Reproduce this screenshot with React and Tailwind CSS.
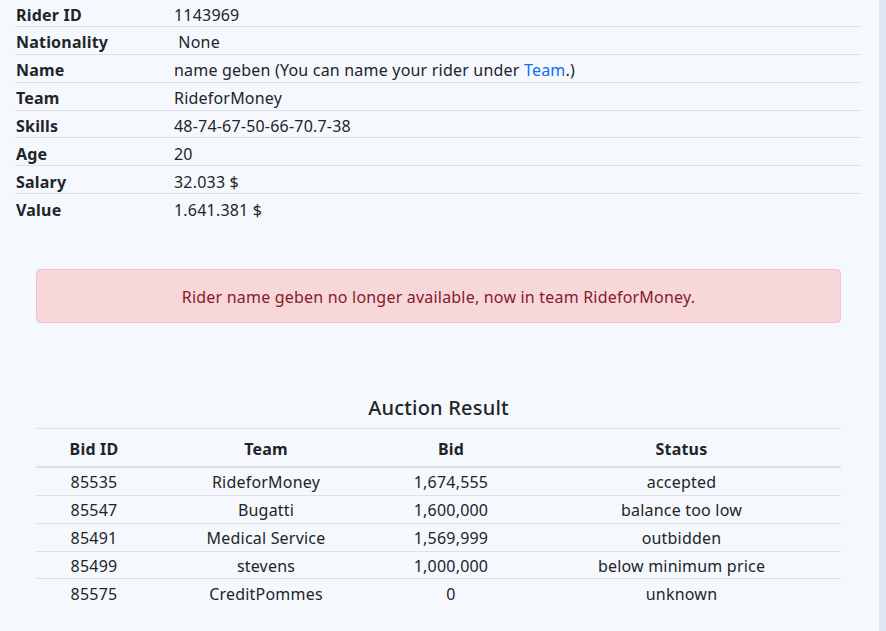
const rider = [
  { label: "Rider ID", value: "1143969" },
  { label: "Nationality", value: "\u00a0None" },
  { label: "Name", value: "name" },
  { label: "Team", value: "RideforMoney" },
  { label: "Skills", value: "48-74-67-50-66-70.7-38" },
  { label: "Age", value: "20" },
  { label: "Salary", value: "32.033 $" },
  { label: "Value", value: "1.641.381 $" },
];

const bids = [
  { id: 85535, team: "RideforMoney", bid: "1,674,555", status: "accepted" },
  { id: 85547, team: "Bugatti", bid: "1,600,000", status: "balance too low" },
  { id: 85491, team: "Medical Service", bid: "1,569,999", status: "outbidden" },
  { id: 85499, team: "stevens", bid: "1,000,000", status: "below minimum price" },
  { id: 85575, team: "CreditPommes", bid: "0", status: "unknown" },
];

export default function App() {
  return (
    <div className="flex min-h-[631px] font-['Noto_Sans',sans-serif] text-[16px] tracking-[0.2px] text-[#212529]">
      <main className="flex-1 bg-[#f5f9fd] pl-[15px] pr-[17px] overflow-hidden">
        {/* Rider details */}
        <table className="w-full -mt-px border-collapse table-fixed">
          <tbody>
            {rider.map((r, i) => (
              <tr key={r.label} className={i < rider.length - 1 ? "border-b border-[#dee2e6]" : ""}>
                <td className="w-[159px] pl-px pt-[4.6px] leading-[22.3px] font-bold">{r.label}</td>
                <td className="pt-[4.6px] leading-[22.3px]">
                  {r.value === "name" ? (
                    <>
                      name geben (You can name your rider under{" "}
                      <a href="#" className="text-[#0d6efd]">Team</a>.)
                    </>
                  ) : (
                    r.value
                  )}
                </td>
              </tr>
            ))}
          </tbody>
        </table>

        {/* Alert */}
        <div className="mx-[21px] mt-[48px] rounded border border-[#f5c2c7] bg-[#f8d7da] pt-[15px] pb-[13px] text-center leading-6 text-[#842029]">
          Rider name geben no longer available, now in team RideforMoney.
        </div>

        {/* Auction result */}
        <div className="mx-[21px] mt-[73px]">
          <h5 className="text-center text-[20px] leading-6 font-medium mb-2">Auction Result</h5>
          <table className="w-full border-collapse table-fixed text-center">
            <thead>
              <tr className="border-t border-b-2 border-t-[#dee2e6] border-b-[#dee2e6]">
                <th className="w-[116px] pt-[7.5px] pb-[5.5px] leading-6 font-bold">Bid ID</th>
                <th className="w-[228px] pt-[7.5px] pb-[5.5px] leading-6 font-bold">Team</th>
                <th className="w-[142px] pt-[7.5px] pb-[5.5px] leading-6 font-bold">Bid</th>
                <th className="pt-[7.5px] pb-[5.5px] leading-6 font-bold">Status</th>
              </tr>
            </thead>
            <tbody>
              {bids.map((b, i) => (
                <tr key={b.id} className={i < bids.length - 1 ? "border-b border-[#dee2e6]" : ""}>
                  <td className="pt-[3.3px] leading-[23.5px]">{b.id}</td>
                  <td className="pt-[3.3px] leading-[23.5px]">{b.team}</td>
                  <td className="pt-[3.3px] leading-[23.5px]">{b.bid}</td>
                  <td className="pt-[3.3px] leading-[23.5px]">{b.status}</td>
                </tr>
              ))}
            </tbody>
          </table>
        </div>
      </main>
      <div className="w-[7px] bg-[#dfe8f3]" />
    </div>
  );
}
